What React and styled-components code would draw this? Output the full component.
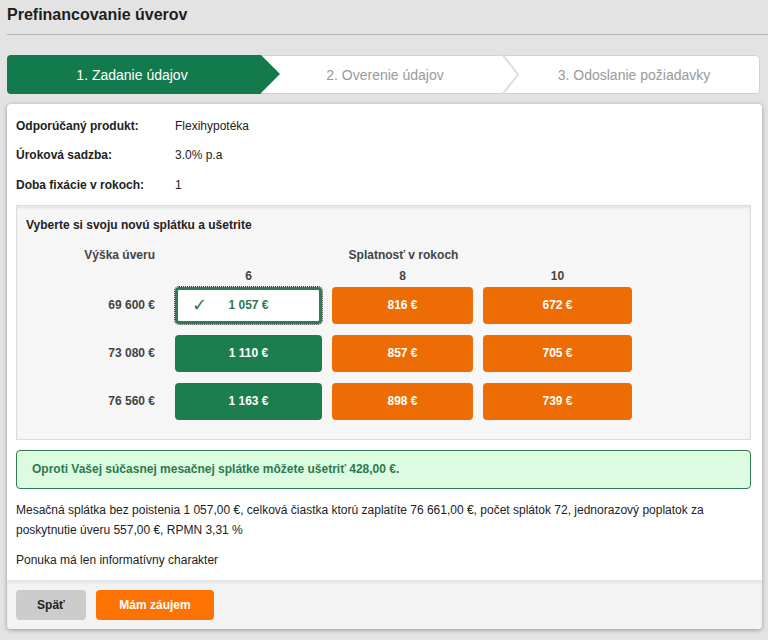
import React from "react";
import styled, { createGlobalStyle } from "styled-components";

const GlobalStyle = createGlobalStyle`
  html, body {
    margin: 0;
    padding: 0;
    background: #e3e3e3;
    font-family: "Liberation Sans", Arial, sans-serif;
    font-size: 12px;
    color: #222;
  }
`;

const loans = [
  { amount: "69 600 €", values: ["1 057 €", "816 €", "672 €"] },
  { amount: "73 080 €", values: ["1 110 €", "857 €", "705 €"] },
  { amount: "76 560 €", values: ["1 163 €", "898 €", "739 €"] },
];

const years = ["6", "8", "10"];

const Chevron = () => (
  <ChevronSvg width="20" height="39" viewBox="0 0 20 39">
    <polyline points="2,-1 18,19.5 2,40" fill="none" stroke="#dedede" strokeWidth="2" />
  </ChevronSvg>
);

const App = () => {
  return (
    <>
      <GlobalStyle />
      <Page>
        <Title>Prefinancovanie úverov</Title>

        <Stepper>
          <Step active>1. Zadanie údajov</Step>
          <Step>
            2. Overenie údajov
            <Chevron />
          </Step>
          <Step>3. Odoslanie požiadavky</Step>
        </Stepper>

        <Card>
          <CardBody>
            <InfoRow>
              <InfoLabel>Odporúčaný produkt:</InfoLabel>
              <span>Flexihypotéka</span>
            </InfoRow>
            <InfoRow>
              <InfoLabel>Úroková sadzba:</InfoLabel>
              <span>3.0% p.a</span>
            </InfoRow>
            <InfoRow>
              <InfoLabel>Doba fixácie v rokoch:</InfoLabel>
              <span>1</span>
            </InfoRow>

            <Panel>
              <PanelTitle>Vyberte si svoju novú splátku a ušetrite</PanelTitle>
              <Grid>
                <HeadLabel>Výška úveru</HeadLabel>
                <HeadSpan>Splatnosť v rokoch</HeadSpan>

                <span />
                {years.map((y) => (
                  <YearCell key={y}>{y}</YearCell>
                ))}

                {loans.map((l, row) => (
                  <React.Fragment key={l.amount}>
                    <AmountCell last={row === loans.length - 1}>{l.amount}</AmountCell>
                    {l.values.map((v, col) => {
                      const selected = row === 0 && col === 0;
                      return (
                        <Option
                          key={v}
                          tone={col === 0 ? "green" : "orange"}
                          selected={selected}
                          last={row === loans.length - 1}
                        >
                          {selected && <Check>✓</Check>}
                          {v}
                        </Option>
                      );
                    })}
                  </React.Fragment>
                ))}
              </Grid>
            </Panel>

            <Alert>Oproti Vašej súčasnej mesačnej splátke môžete ušetriť 428,00 €.</Alert>

            <Text>
              Mesačná splátka bez poistenia 1 057,00 €, celková čiastka ktorú
              zaplatíte 76 661,00 €, počet splátok 72, jednorazový poplatok za
              poskytnutie úveru 557,00 €, RPMN 3,31 %
            </Text>
            <Text>Ponuka má len informatívny charakter</Text>
          </CardBody>

          <Footer>
            <Button kind="back">Späť</Button>
            <Button kind="primary">Mám záujem</Button>
          </Footer>
        </Card>
      </Page>
    </>
  );
};

const Page = styled.div`
  padding-bottom: 12px;
`;

const Title = styled.h1`
  margin: 0 0 0 7px;
  padding: 5px 0 9px;
  font-size: 16px;
  line-height: 20px;
  font-weight: bold;
  color: #1e1e1e;
  border-bottom: 1px solid #b4b4b4;
`;

const Stepper = styled.div`
  display: flex;
  margin: 20px 8px 0 7px;
  height: 39px;
  background: #fff;
  border: 1px solid #d2d2d2;
  border-radius: 4px;
  box-sizing: border-box;
`;

const Step = styled.div`
  position: relative;
  flex: 1;
  display: flex;
  align-items: center;
  justify-content: center;
  font-size: 14px;
  color: ${(p) => (p.active ? "#fff" : "#9a9a9a")};
  background: ${(p) => (p.active ? "#137a4e" : "transparent")};
  margin: -1px 0 -1px -1px;
  padding-right: ${(p) => (p.active ? "4px" : "0")};
  border-radius: ${(p) => (p.active ? "4px 0 0 4px" : "0")};

  &::after {
    content: "";
    display: ${(p) => (p.active ? "block" : "none")};
    position: absolute;
    right: -19px;
    top: 0;
    border-left: 19px solid #137a4e;
    border-top: 19.5px solid transparent;
    border-bottom: 19.5px solid transparent;
  }
`;

const ChevronSvg = styled.svg`
  position: absolute;
  right: -10px;
  top: 0;
`;

const Card = styled.div`
  margin: 10px 6px 0 7px;
  background: #fff;
  border-radius: 4px;
  box-shadow: 0 1px 4px rgba(0, 0, 0, 0.35);
  overflow: hidden;
`;

const CardBody = styled.div`
  padding: 7px 11px 10px 9px;
`;

const InfoRow = styled.div`
  display: flex;
  align-items: center;
  height: 29.5px;
  color: #222;
`;

const InfoLabel = styled.span`
  width: 159px;
  font-weight: bold;
`;

const Panel = styled.div`
  margin-top: 5px;
  background: #f7f6f6;
  border: 1px solid #dcdcdc;
  box-shadow: inset 0 2px 3px rgba(0, 0, 0, 0.07);
  padding: 11px 0 19px 0;
`;

const PanelTitle = styled.div`
  padding-left: 9px;
  font-weight: bold;
  line-height: 16px;
  color: #222;
`;

const Grid = styled.div`
  display: grid;
  grid-template-columns: 148px 147px 141px 149px;
  column-gap: 10px;
  margin-top: 14px;
  font-weight: bold;
  color: #444;
`;

const HeadLabel = styled.div`
  text-align: right;
  padding-right: 10px;
  line-height: 16px;
`;

const HeadSpan = styled.div`
  grid-column: 2 / span 3;
  text-align: center;
  line-height: 16px;
`;

const YearCell = styled.div`
  text-align: center;
  line-height: 16px;
  margin: 5px 0 3px;
`;

const AmountCell = styled.div`
  display: flex;
  align-items: center;
  justify-content: flex-end;
  padding-right: 10px;
  height: 37px;
  margin-bottom: ${(p) => (p.last ? "0" : "11px")};
`;

const Option = styled.div`
  position: relative;
  display: flex;
  align-items: center;
  justify-content: center;
  height: 37px;
  margin-bottom: ${(p) => (p.last ? "0" : "11px")};
  box-sizing: border-box;
  border-radius: 4px;
  font-weight: bold;
  font-size: 12px;
  color: ${(p) => (p.selected ? "#2c7a52" : "#fff")};
  background: ${(p) =>
    p.selected ? "#fff" : p.tone === "green" ? "#1c7e4f" : "#ee6c04"};
  border: ${(p) => (p.selected ? "3px solid #2f7a55" : "none")};
  outline: ${(p) => (p.selected ? "1px dotted #333" : "none")};
  outline-offset: 0;
`;

const Check = styled.span`
  position: absolute;
  left: 14px;
  top: 50%;
  transform: translateY(-52%);
  font-size: 18px;
  font-weight: normal;
  color: #2c7a52;
`;

const Alert = styled.div`
  margin-top: 10px;
  height: 39px;
  box-sizing: border-box;
  display: flex;
  align-items: center;
  padding: 0 15px;
  background: #ddfbe0;
  border: 1px solid #2f7b53;
  border-radius: 4px;
  color: #2a7a4f;
  font-weight: bold;
`;

const Text = styled.p`
  margin: 11px 0 0;
  line-height: 20px;
  color: #222;
  & + & {
    margin-top: 10px;
  }
`;

const Footer = styled.div`
  display: flex;
  gap: 10px;
  padding: 9px 9px 9px;
  background: #f4f3f3;
  border-top: 1px solid #e2e2e2;
  box-shadow: inset 0 2px 3px rgba(0, 0, 0, 0.05);
`;

const Button = styled.button`
  height: 30px;
  border: none;
  border-radius: 4px;
  font-family: "Liberation Sans", Arial, sans-serif;
  font-size: 12px;
  font-weight: bold;
  padding: 0;
  width: ${(p) => (p.kind === "primary" ? "118px" : "70px")};
  background: ${(p) => (p.kind === "primary" ? "#fd7303" : "#cccccc")};
  color: ${(p) => (p.kind === "primary" ? "#fff" : "#222")};
`;

export default App;
